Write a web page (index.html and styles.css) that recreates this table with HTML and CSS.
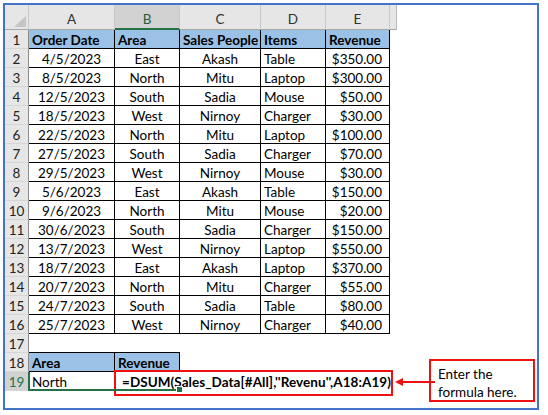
FILE: index.html
```html
<!DOCTYPE html>
<html>
<head>
<meta charset="utf-8">
<link rel="stylesheet" href="styles.css">
</head>
<body>
<div class="frame">
  <div class="sheet">
    <div class="ch corner"><svg class="tri" width="12" height="11" viewBox="0 0 12 11"><polygon points="12,0 12,11 0,11" fill="#c4c4c4"/></svg></div>
    <div class="ch">A</div><div class="ch sel">B</div><div class="ch">C</div><div class="ch">D</div><div class="ch">E</div><div class="ch cf"></div>

    <div class="rh">1</div><div class="t th">Order Date</div><div class="t th">Area</div><div class="t th">Sales People</div><div class="t th">Items</div><div class="t th">Revenue</div><div></div>
    <div class="rh">2</div><div class="t ctr">4/5/2023</div><div class="t ctr">East</div><div class="t ctr">Akash</div><div class="t">Table</div><div class="t num">$350.00</div><div></div>
    <div class="rh">3</div><div class="t ctr">8/5/2023</div><div class="t ctr">North</div><div class="t ctr">Mitu</div><div class="t">Laptop</div><div class="t num">$300.00</div><div></div>
    <div class="rh">4</div><div class="t ctr">12/5/2023</div><div class="t ctr">South</div><div class="t ctr">Sadia</div><div class="t">Mouse</div><div class="t num">$50.00</div><div></div>
    <div class="rh">5</div><div class="t ctr">18/5/2023</div><div class="t ctr">West</div><div class="t ctr">Nirnoy</div><div class="t">Charger</div><div class="t num">$30.00</div><div></div>
    <div class="rh">6</div><div class="t ctr">22/5/2023</div><div class="t ctr">North</div><div class="t ctr">Mitu</div><div class="t">Laptop</div><div class="t num">$100.00</div><div></div>
    <div class="rh">7</div><div class="t ctr">27/5/2023</div><div class="t ctr">South</div><div class="t ctr">Sadia</div><div class="t">Charger</div><div class="t num">$70.00</div><div></div>
    <div class="rh">8</div><div class="t ctr">29/5/2023</div><div class="t ctr">West</div><div class="t ctr">Nirnoy</div><div class="t">Mouse</div><div class="t num">$30.00</div><div></div>
    <div class="rh">9</div><div class="t ctr">5/6/2023</div><div class="t ctr">East</div><div class="t ctr">Akash</div><div class="t">Table</div><div class="t num">$150.00</div><div></div>
    <div class="rh">10</div><div class="t ctr">9/6/2023</div><div class="t ctr">North</div><div class="t ctr">Mitu</div><div class="t">Mouse</div><div class="t num">$20.00</div><div></div>
    <div class="rh">11</div><div class="t ctr">30/6/2023</div><div class="t ctr">South</div><div class="t ctr">Sadia</div><div class="t">Charger</div><div class="t num">$150.00</div><div></div>
    <div class="rh">12</div><div class="t ctr">13/7/2023</div><div class="t ctr">West</div><div class="t ctr">Nirnoy</div><div class="t">Laptop</div><div class="t num">$550.00</div><div></div>
    <div class="rh">13</div><div class="t ctr">18/7/2023</div><div class="t ctr">East</div><div class="t ctr">Akash</div><div class="t">Laptop</div><div class="t num">$370.00</div><div></div>
    <div class="rh">14</div><div class="t ctr">20/7/2023</div><div class="t ctr">North</div><div class="t ctr">Mitu</div><div class="t">Charger</div><div class="t num">$55.00</div><div></div>
    <div class="rh">15</div><div class="t ctr">24/7/2023</div><div class="t ctr">South</div><div class="t ctr">Sadia</div><div class="t">Table</div><div class="t num">$80.00</div><div></div>
    <div class="rh">16</div><div class="t ctr">25/7/2023</div><div class="t ctr">West</div><div class="t ctr">Nirnoy</div><div class="t">Charger</div><div class="t num">$40.00</div><div></div>

    <div class="rh">17</div><div class="bb"></div><div class="bb"></div><div></div><div></div><div></div><div></div>
    <div class="rh">18</div><div class="t th">Area</div><div class="t th">Revenue</div><div></div><div></div><div></div><div></div>

    <div class="rh rsel r19 c1">19</div>
    <div class="t r19 c2">North</div>
    <div class="formula r19 c3">=DSUM(Sales_Data[#All],''Revenu'',A18:A19)</div>
    <div class="selection"><span class="handle"></span></div>
    <div class="redbox"></div>
  </div>

  <svg class="arrow" width="40" height="10" viewBox="0 0 40 10">
    <line x1="6" y1="5" x2="40" y2="5" stroke="#ee1111" stroke-width="2"/>
    <polygon points="0,5 8,1 8,9" fill="#ee1111"/>
  </svg>
  <div class="callout">Enter the<br>formula here.</div>
</div>
</body>
</html>
```

FILE: styles.css
```css
body {
  margin: 0;
  background: #ffffff;
  font-family: Lato, "Noto Sans", sans-serif;
  color: #000;
}

.frame {
  margin: 3px 0 0 3px;
  width: 536px;
  height: 407px;
  box-sizing: border-box;
  border: 2px solid #4472c4;
  position: relative;
}

.sheet {
  display: grid;
  grid-template-columns: 24px 86px 65px 81px 65px 64px 7px;
  grid-template-rows: 25px repeat(19, 19px);
  width: 392px;
  font-size: 13.5px;
}

.sheet > div {
  box-sizing: border-box;
  white-space: nowrap;
  line-height: 19px;
  padding: 1px 3px 0;
  overflow: hidden;
}

.ch {
  background: #e6e6e6;
  border-right: 1px solid #c8c8c8;
  border-bottom: 1px solid #a8a8a8;
  text-align: center;
  color: #333;
  padding-top: 5px !important;
}

.ch.sel {
  background: #d2d2d2;
  border-bottom: 2px solid #217346;
  color: #1e5e3a;
}

.ch.cf {
  border-right: 1px solid #b8b8b8;
}

.corner {
  position: relative;
}

.tri {
  position: absolute;
  right: 2px;
  bottom: 2px;
}

.rh {
  background: #e6e6e6;
  border-right: 1px solid #8a8a8a;
  border-bottom: 1px solid #d6d6d6;
  text-align: center;
  color: #222;
}

.rh.rsel {
  background: #d2d2d2;
  color: #217346;
}

.r19 {
  grid-row: 20;
}

.c1 {
  grid-column: 1;
}

.c2 {
  grid-column: 2;
}

.c3 {
  grid-column: 3;
}

.t {
  border-right: 1px solid #000;
  border-bottom: 1px solid #000;
}

.th {
  background: #9bc2e6;
  font-weight: 700;
}

.ctr {
  text-align: center;
}

.num {
  text-align: right;
  padding-right: 7px !important;
}

.bb {
  border-bottom: 1px solid #000;
}

.sheet > .formula {
  overflow: visible;
  font-weight: 700;
  font-size: 13.5px;
  letter-spacing: 0.05px;
  padding-left: 7px;
  border-bottom: 1px solid #000;
}

.sheet > .selection {
  grid-row: 20;
  grid-column: 2 / 4;
  border-left: 2px solid #217346;
  border-bottom: 2px solid #217346;
  padding: 0;
  overflow: visible;
  position: relative;
  margin-left: -1px;
}

.handle {
  position: absolute;
  right: -3px;
  bottom: -4px;
  width: 5px;
  height: 5px;
  background: #217346;
  border: 1px solid #fff;
}

.sheet > .redbox {
  grid-row: 20;
  grid-column: 3 / 8;
  margin: -2px 4px -5px -1px;
  border: 2px solid #ee1111;
  padding: 0;
}

.arrow {
  position: absolute;
  left: 390px;
  top: 372px;
}

.callout {
  position: absolute;
  left: 424px;
  top: 354px;
  width: 106px;
  height: 43px;
  box-sizing: border-box;
  border: 2px solid #ee1111;
  padding: 4px 0 0 7px;
  font-size: 13.5px;
  line-height: 18px;
  color: #000;
}
```
